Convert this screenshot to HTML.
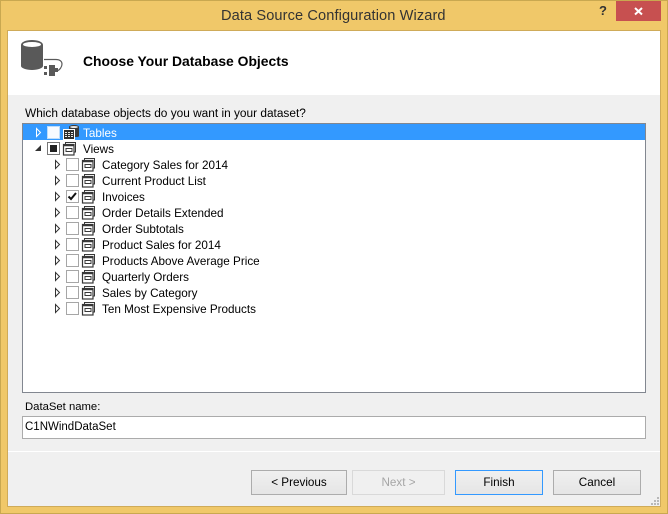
<!DOCTYPE html>
<html><head><meta charset="utf-8"><style>
html,body{margin:0;padding:0}
body{width:668px;height:514px;overflow:hidden;position:relative;background:#f0c869;font-family:"Liberation Sans",sans-serif;color:#000;font-size:12px}
.a{position:absolute;white-space:nowrap;box-sizing:border-box}
.t{position:absolute;white-space:nowrap;font-size:11.7px;line-height:16px}
.r{margin-top:1px}
.btn{position:absolute;box-sizing:border-box;top:470px;height:25px;border:1px solid #acacac;background:linear-gradient(#f0f0f0,#e5e5e5);text-align:center;line-height:23px;font-size:11.7px}
svg{position:absolute;overflow:visible}
</style></head><body>
<div class="a" style="left:0;top:0;width:668px;height:514px;border:1px solid #c9a850"></div>
<div class="a" style="left:221px;top:7px;font-size:14.6px;line-height:18px;color:#333;letter-spacing:.1px">Data Source Configuration Wizard</div>
<div class="a" style="left:599px;top:4px;font-size:13px;font-weight:bold;line-height:14px;color:#333">?</div>
<div class="a" style="left:616px;top:1px;width:45px;height:20px;background:#c75050"></div>
<svg style="left:0;top:0" width="668" height="514"><path d="M635 8l7 6.500M642 8l-7 6.500" stroke="#fff" stroke-width="2" fill="none"/></svg>
<div class="a" style="left:7px;top:30px;width:654px;height:477px;border:1px solid #cfab59;background:#f0f0f0"></div>
<div class="a" style="left:8px;top:31px;width:652px;height:64px;background:#fff"></div>
<svg style="left:0;top:0" width="668" height="514">
<path d="M21 45c0-3 5-5 11-5s11 2 11 5v21c0 2-5 4-11 4s-11-2-11-4z" fill="#595959"/>
<ellipse cx="32" cy="44.500" rx="9" ry="2.500" fill="#fff"/>
<path d="M44 59.500h12c4 0 6 2 6 4.500s-2 6-5 7" stroke="#595959" stroke-width="1.200" fill="none"/>
<path d="M49 65h6v11h-6zM55 68h3v4h-3z" fill="#595959"/>
<path d="M44 66h3v3h-3zM44 72h3v3h-3z" fill="#595959"/>
</svg>
<div class="a" style="left:83px;top:53px;font-size:13.9px;font-weight:bold;line-height:16px">Choose Your Database Objects</div>
<div class="t" style="left:25px;top:105px;font-size:11.87px">Which database objects do you want in your dataset?</div>
<div class="a" style="left:22px;top:123px;width:624px;height:270px;border:1px solid #828790;background:#fff"></div>
<div class="a" style="left:23px;top:124px;width:622px;height:16px;background:#3399ff"></div>
<svg style="left:0;top:0" width="668" height="514">
<defs>
<g id="v" fill="none" stroke="#383838" stroke-width="1">
<rect x="2.500" y=".5" width="10" height="9.500"/>
<rect x=".5" y="2.500" width="10.500" height="10.500" fill="#fff" stroke-width="1.200"/>
<path d="M.5 3.500h10.500" stroke-width="1.500"/>
<path d="M3 6.500h6v3H3z"/>
</g>
<path id="o" d="M.5.500l4 4-4 4z" fill="#fff" stroke="#333"/>
<rect id="c" x=".5" y=".5" width="12" height="12" fill="#fff" stroke="#a6a6a6"/>
</defs>
<path d="M36.500 128.500l4 4-4 4z" fill="none" stroke="#fff"/>
<rect x="47.500" y="126.500" width="12" height="12" fill="#f6faff" stroke="#bcdcfb"/>
<path d="M69 127c0-1 2-2 5-2s5 1 5 2v9c0 1-2 1-5 1s-5 0-5-1z" fill="#3a3a3a"/>
<ellipse cx="74" cy="127" rx="4" ry="1" fill="#e6e6e6"/>
<rect x="63" y="129" width="12" height="11" fill="#fff"/>
<rect x="64" y="130" width="10" height="9" fill="#2e2e2e"/>
<path d="M65 132h2v1h-2zM68 132h2v1h-2zM71 132h2v1h-2zM65 134h2v1h-2zM68 134h2v1h-2zM71 134h2v1h-2zM65 136h2v1h-2zM68 136h2v1h-2zM71 136h2v1h-2z" fill="#e8e8e8"/>
<path d="M35 151l6-6v6z" fill="#333"/>
<rect x="47.500" y="142.500" width="12" height="12" fill="#fff" stroke="#777"/>
<rect x="50" y="145" width="7" height="7" fill="#222"/>
<use href="#v" x="63" y="142"/>
<use href="#o" x="55" y="160"/><use href="#c" x="66" y="158"/><use href="#v" x="82" y="158"/>
<use href="#o" x="55" y="176"/><use href="#c" x="66" y="174"/><use href="#v" x="82" y="174"/>
<use href="#o" x="55" y="192"/><use href="#c" x="66" y="190"/><use href="#v" x="82" y="190"/>
<path d="M68.500 196.500l2.500 2.500 5-6" fill="none" stroke="#111" stroke-width="2"/>
<use href="#o" x="55" y="208"/><use href="#c" x="66" y="206"/><use href="#v" x="82" y="206"/>
<use href="#o" x="55" y="224"/><use href="#c" x="66" y="222"/><use href="#v" x="82" y="222"/>
<use href="#o" x="55" y="240"/><use href="#c" x="66" y="238"/><use href="#v" x="82" y="238"/>
<use href="#o" x="55" y="256"/><use href="#c" x="66" y="254"/><use href="#v" x="82" y="254"/>
<use href="#o" x="55" y="272"/><use href="#c" x="66" y="270"/><use href="#v" x="82" y="270"/>
<use href="#o" x="55" y="288"/><use href="#c" x="66" y="286"/><use href="#v" x="82" y="286"/>
<use href="#o" x="55" y="304"/><use href="#c" x="66" y="302"/><use href="#v" x="82" y="302"/>
</svg>
<div class="t r" style="left:83px;top:125px;color:#fff">Tables</div>
<div class="t r" style="left:83px;top:141px">Views</div>
<div class="t r" style="left:102px;top:157px">Category Sales for 2014</div>
<div class="t r" style="left:102px;top:173px">Current Product List</div>
<div class="t r" style="left:102px;top:189px">Invoices</div>
<div class="t r" style="left:102px;top:205px">Order Details Extended</div>
<div class="t r" style="left:102px;top:221px">Order Subtotals</div>
<div class="t r" style="left:102px;top:237px">Product Sales for 2014</div>
<div class="t r" style="left:102px;top:253px">Products Above Average Price</div>
<div class="t r" style="left:102px;top:269px">Quarterly Orders</div>
<div class="t r" style="left:102px;top:285px">Sales by Category</div>
<div class="t r" style="left:102px;top:301px">Ten Most Expensive Products</div>
<div class="t" style="left:25px;top:399px;font-size:11.3px">DataSet name:</div>
<div class="a" style="left:22px;top:416px;width:624px;height:23px;border:1px solid #ababab;background:#fff;padding-left:2px;line-height:20px;font-size:11.5px">C1NWindDataSet</div>
<div class="a" style="left:8px;top:451px;width:652px;height:1px;background:#fff"></div>
<div class="btn" style="left:251px;width:96px">&lt; Previous</div>
<div class="btn" style="left:352px;width:93px;border-color:#d9d9d9;background:#f0f0f0;color:#a6a6a6">Next &gt;</div>
<div class="btn" style="left:455px;width:88px;border-color:#3399ff">Finish</div>
<div class="btn" style="left:553px;width:88px">Cancel</div>
<svg style="left:0;top:0" width="668" height="514"><path d="M657 497h2v2h-2zM654 500h2v2h-2zM657 500h2v2h-2zM651 503h2v2h-2zM654 503h2v2h-2zM657 503h2v2h-2z" fill="#b8b8b8"/></svg>
</body></html>
